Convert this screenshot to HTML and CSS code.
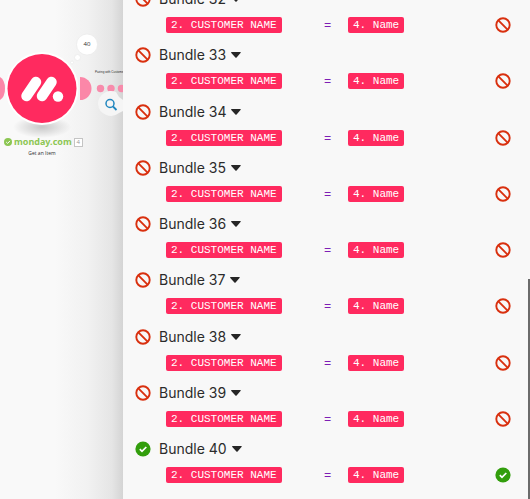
FILE: index.html
```
<!DOCTYPE html>
<html lang="en">
<head>
    <meta charset="UTF-8">
    <meta name="viewport" content="width=device-width, initial-scale=1.0">
    <title>Scenario bundles</title>
    <link rel="stylesheet" href="styles.css">
</head>
<body>

<svg class="symbols" aria-hidden="true">
    <symbol id="blocked" viewBox="0 0 16 16">
        <circle cx="8" cy="8" r="6.700" fill="none" stroke="#d9300f" stroke-width="1.900"/>
        <path d="M3.400 3.400L12.600 12.600" stroke="#d9300f" stroke-width="1.900"/>
    </symbol>
    <symbol id="passed" viewBox="0 0 16 16">
        <circle cx="8" cy="8" r="7.600" fill="#329e0c"/>
        <path d="M4.800 8.200L7 10.400L11.300 6" fill="none" stroke="#fff" stroke-width="1.700"/>
    </symbol>
</svg>

<div class="page">
    <div class="canvas">
        <svg class="module" viewBox="0 0 124 160" aria-hidden="true">
            <defs>
                <radialGradient id="ground">
                    <stop offset="0" stop-color="#000" stop-opacity=".2"/>
                    <stop offset="1" stop-color="#000" stop-opacity="0"/>
                </radialGradient>
            </defs>
            <ellipse cx="42" cy="127" rx="29" ry="11" fill="url(#ground)"/>
            <path d="M0 77Q5 80 5 88.500T0 100Z" fill="#fb87a8"/>
            <path d="M80 77A11.500 11.500 0 0 1 80 100Z" fill="#fb87a8"/>
            <circle cx="42" cy="88.500" r="36.500" fill="#fff"/>
            <circle cx="42" cy="88.500" r="34.500" fill="#ff2a5f"/>
            <g stroke="#fff" stroke-width="10.500" stroke-linecap="round">
                <path d="M26.500 96L36 82"/>
                <path d="M42 96L51.500 82"/>
            </g>
            <circle cx="58" cy="96.500" r="5.200" fill="#fff"/>
            <g fill="#fff" stroke="#e9e9e9" stroke-width=".7">
                <circle cx="87" cy="44.500" r="10.500"/>
                <circle cx="77.500" cy="57.500" r="3"/>
                <circle cx="72" cy="62.500" r="1.500"/>
            </g>
            <g fill="#f78bab">
                <circle cx="100.500" cy="88.500" r="3.700"/>
                <circle cx="111" cy="88.500" r="3.700"/>
                <circle cx="121.500" cy="88.500" r="3.700"/>
            </g>
            <path d="M98 104A13 13 0 0 1 116 92L119 97L123 100V111L119 113A13 13 0 0 1 98 104Z" fill="#f5f5f5"/>
            <circle cx="110" cy="103.500" r="4" fill="none" stroke="#2187bf" stroke-width="1.500"/>
            <path d="M113 106.500L116.500 110" stroke="#2187bf" stroke-width="1.800"/>
        </svg>
        <span class="count">40</span>
        <span class="filter-label">Pairing with Customer N</span>
        <div class="caption">
            <div class="app">
                <svg class="app-check" viewBox="0 0 8 8" aria-hidden="true">
                    <circle cx="4" cy="4" r="4" fill="#8cc653"/>
                    <path d="M2.200 4L3.600 5.400L6 2.900" fill="none" stroke="#fff" stroke-width="1"/>
                </svg>
                <span class="app-name">monday.com</span>
                <span class="app-id">4</span>
            </div>
            <div class="action">Get an Item</div>
        </div>
    </div>

    <div class="panel">
        <div class="bundles" id="bundles"></div>
        <div class="scroll-thumb"></div>
    </div>
</div>

<script>
    const bundles = document.getElementById('bundles');

    for (let number = 32; number <= 40; number++) {
        const status = number === 40 ? 'passed' : 'blocked';
        bundles.innerHTML += `
            <section class="bundle">
                <div class="bundle-head">
                    <svg class="status"><use href="#${status}"/></svg>
                    <button class="toggle" type="button">Bundle ${number}
                        <svg class="caret" viewBox="0 0 10 6"><path d="M0 .6Q0 0 .7 0H9.300Q10 0 9.700 .8L5.600 5.500Q5 6 4.400 5.500L.3 .9Z" fill="#262626"/></svg>
                    </button>
                </div>
                <div class="condition">
                    <span class="tag">2. CUSTOMER NAME</span>
                    <span class="operator">=</span>
                    <span class="tag">4. Name</span>
                    <svg class="status"><use href="#${status}"/></svg>
                </div>
            </section>
        `;
    }
</script>

</body>
</html>
```

FILE: styles.css
```
* {
    box-sizing: border-box;
}
body {
    margin: 0;
    font-family: Inter, "Liberation Sans", sans-serif;
    background-color: #f8f8f8;
    color: #2b2b2b;
}
.symbols {
    display: none;
}
.page {
    display: flex;
    height: 100vh;
    overflow: hidden;
}
.canvas {
    position: relative;
    flex: 0 0 123px;
    overflow: hidden;
    background: linear-gradient(to right, #f9f9f9 45%, #f1f1f1 72%, #e5e5e5 91%, #d4d4d4 100%);
    font-family: "Open Sans", sans-serif;
}
.module {
    position: absolute;
    top: 0;
    left: 0;
    width: 124px;
    height: 160px;
}
.count {
    position: absolute;
    top: 39px;
    left: 77px;
    width: 20px;
    font-size: 6px;
    line-height: 11px;
    text-align: center;
}
.filter-label {
    position: absolute;
    top: 68px;
    left: 95px;
    font-family: "Liberation Sans", sans-serif;
    font-size: 3px;
    line-height: 8px;
    white-space: nowrap;
}
.caption {
    position: absolute;
    top: 136px;
    left: 4px;
}
.app {
    display: flex;
    align-items: center;
    gap: 2px;
    height: 12px;
}
.app-check {
    width: 8px;
    height: 8px;
}
.app-name {
    font-family: "Noto Sans", sans-serif;
    font-size: 9px;
    font-weight: 700;
    line-height: 12px;
    color: #8cc653;
}
.app-id {
    width: 9px;
    height: 9px;
    border: 1px solid #c4c4c4;
    background-color: #fff;
    font-size: 6px;
    line-height: 7px;
    text-align: center;
    color: #999;
}
.action {
    width: 76px;
    font-size: 5px;
    line-height: 10px;
    text-align: center;
}
.panel {
    position: relative;
    flex: 1;
    background-color: #f8f8f8;
}
.bundles {
    display: flex;
    flex-direction: column;
    justify-content: space-between;
    height: calc(100% + 15px);
    margin-top: -15px;
    padding: 0 19px 12px 12px;
}
.bundle-head {
    display: flex;
    align-items: center;
    gap: 8px;
    height: 28px;
}
.status {
    flex: none;
    width: 16px;
    height: 16px;
}
.toggle {
    display: flex;
    align-items: center;
    gap: 5px;
    padding: 0;
    border: 0;
    background: none;
    font-family: inherit;
    font-size: 14px;
    line-height: 20px;
    color: inherit;
}
.caret {
    width: 10px;
    height: 6px;
}
.condition {
    display: grid;
    grid-template-columns: 152px 30px 1fr 16px;
    align-items: center;
    height: 24px;
    padding-left: 31px;
}
.tag {
    justify-self: start;
    padding: 0 5px;
    border-radius: 2px;
    background-color: #ff2a5f;
    font-family: "Courier New", "Liberation Mono", monospace;
    font-size: 11px;
    line-height: 16px;
    white-space: nowrap;
    color: #fff;
}
.operator {
    padding-left: 6px;
    font-family: "Courier New", "Liberation Mono", monospace;
    font-size: 12px;
    line-height: 14px;
    padding-top: 2px;
    color: #7d1fb5;
}
.scroll-thumb {
    position: absolute;
    top: 56%;
    right: 0;
    bottom: 0;
    width: 2px;
    background-color: #6b6b6b;
}
```
